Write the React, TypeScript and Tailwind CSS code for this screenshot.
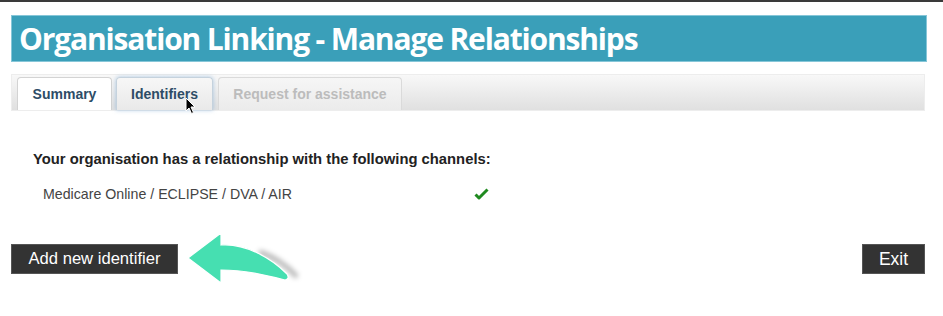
import React from "react";

function CurvedArrow() {
  return (
    <svg width="130" height="66" viewBox="0 0 130 66" className="absolute left-[183px] top-[226px]">
      <defs>
        <filter id="blur" x="-30%" y="-60%" width="160%" height="220%">
          <feGaussianBlur stdDeviation="2.5" />
        </filter>
      </defs>
      <path d="M76 26 C92 31 104 40 114 51" stroke="rgba(0,0,0,0.28)" strokeWidth="5" fill="none" filter="url(#blur)" />
      <path d="M5 32 L38 7 L38 19 C62 17 88 32 104 48 Q107 53 102 54 C82 49 62 44 38 44 L38 57 Z" fill="#46dfb1" stroke="#ffffff" strokeWidth="1.2" />
    </svg>
  );
}

function Cursor() {
  return (
    <svg width="12" height="18" viewBox="0 0 12 18" className="absolute left-[185px] top-[97px]">
      <path d="M1 1 L1 14 L4 11 L6.5 16.5 L8.5 15.5 L6 10 L10 10 Z" fill="#000" stroke="#fff" strokeWidth="1" />
    </svg>
  );
}

export default function App() {
  return (
    <div className="relative w-[943px] h-[316px] bg-white overflow-hidden" style={{ fontFamily: '"Liberation Sans", Arial, sans-serif' }}>
      <div className="h-[2px] bg-[#3a3a3a]" />
      <div className="mx-[11px] mt-[13px] w-[916px] h-[47px] bg-[#3a9fb9] border border-[#86c6d8] flex items-center pl-[7px]">
        <span className="text-white font-bold text-[30px] tracking-[-1.15px] leading-none" style={{ fontFamily: '"Open Sans", sans-serif' }}>
          Organisation Linking - Manage Relationships
        </span>
      </div>
      <div className="mx-[11px] mt-[12px] w-[914px] h-[37px] bg-gradient-to-b from-[#f8f8f8] to-[#e0e0e0] border border-[#ededed] flex items-end pl-[5px]">
        <div className="w-[95px] h-[33px] bg-white border border-[#d3d3d3] border-b-0 rounded-t-[4px] flex items-center justify-center text-[14px] font-bold text-[#2d4c66]">
          Summary
        </div>
        <div className="ml-[4px] w-[97px] h-[33px] bg-gradient-to-b from-[#f7f7f7] to-[#e9e9e9] border border-[#c5d2dd] border-b-0 rounded-t-[4px] shadow-[0_0_4px_rgba(110,160,210,0.55)] flex items-center justify-center text-[14px] font-bold text-[#2d4c66]">
          Identifiers
        </div>
        <div className="ml-[5px] w-[184px] h-[33px] bg-gradient-to-b from-[#f6f6f6] to-[#ebebeb] border border-[#dadada] border-b-0 rounded-t-[4px] flex items-center justify-center text-[14px] font-bold text-[#bcbcbc]">
          Request for assistance
        </div>
      </div>
      <div className="ml-[33px] mt-[40px] text-[14.8px] leading-[17px] font-bold text-[#222]">
        Your organisation has a relationship with the following channels:
      </div>
      <div className="ml-[43px] mt-[18px] h-[16px] flex items-center text-[14.2px] leading-[16px] text-[#444]">
        <span className="w-[431px]">Medicare Online / ECLIPSE / DVA / AIR</span>
        <svg width="15" height="12" viewBox="0 0 15 12">
          <path d="M1.5 6.5 L5 10 L13.5 1.5" stroke="#1f8a1f" strokeWidth="3" fill="none" strokeLinejoin="round" />
        </svg>
      </div>
      <div className="mx-[11px] mt-[42px] w-[914px] flex justify-between">
        <button className="h-[30px] w-[167px] bg-[#333] text-white text-[16.6px] border border-[#555]">Add new identifier</button>
        <button className="h-[30px] w-[63px] bg-[#333] text-white text-[17.5px] border border-[#555]">Exit</button>
      </div>
      <CurvedArrow />
      <Cursor />
    </div>
  );
}
